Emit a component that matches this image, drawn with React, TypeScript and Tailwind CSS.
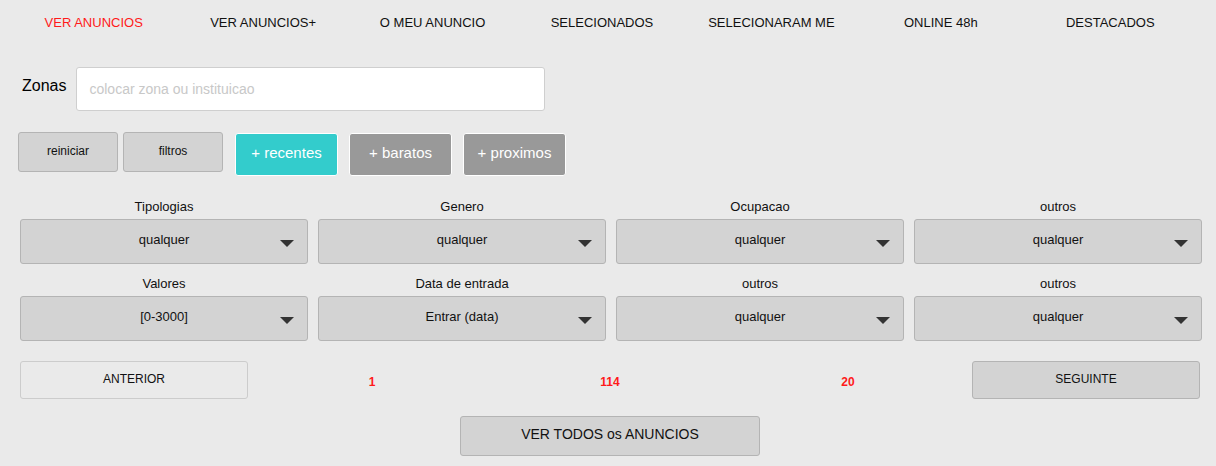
const NAV_ITEMS = [
  "VER ANUNCIOS",
  "VER ANUNCIOS+",
  "O MEU ANUNCIO",
  "SELECIONADOS",
  "SELECIONARAM ME",
  "ONLINE 48h",
  "DESTACADOS",
]

const FILTER_ROWS = [
  [
    { label: "Tipologias", value: "qualquer" },
    { label: "Genero", value: "qualquer" },
    { label: "Ocupacao", value: "qualquer" },
    { label: "outros", value: "qualquer" },
  ],
  [
    { label: "Valores", value: "[0-3000]" },
    { label: "Data de entrada", value: "Entrar (data)" },
    { label: "outros", value: "qualquer" },
    { label: "outros", value: "qualquer" },
  ],
]

function SelectBox({ value }: { value: string }) {
  return (
    <div className="relative flex h-[45px] items-center justify-center rounded-[3px] border border-[#b4b4b4] bg-[#d3d3d3] text-[13px] text-[#111]">
      <span className="-mt-[4px]">{value}</span>
      <svg
        className="absolute right-[13px] top-[20px]"
        width="14"
        height="7"
        viewBox="0 0 14 7"
      >
        <path d="M0 0 L14 0 L7 7 Z" fill="#333" />
      </svg>
    </div>
  )
}

export default function App() {
  return (
    <div
      className="min-h-[466px] w-[1216px] bg-[#eaeaea] text-black"
      style={{ fontFamily: '"Liberation Sans", Arial, sans-serif' }}
    >
      <nav className="ml-[9px] grid w-[1186px] grid-cols-7 pt-[15px]">
        {NAV_ITEMS.map((item, i) => (
          <a
            key={item}
            href="#"
            className={`text-center text-[13px] leading-[15px] ${i === 0 ? "text-[#ff1a1a]" : "text-[#111]"}`}
          >
            {item}
          </a>
        ))}
      </nav>

      <div className="mt-[37px] flex items-center pl-[22px]">
        <label className="mr-[10px] -mt-[6px] text-[16px] leading-[18px]">Zonas</label>
        <input
          type="text"
          placeholder="colocar zona ou instituicao"
          className="h-[44px] w-[469px] rounded-[3px] border border-[#cfcfcf] bg-white px-[12px] text-[14px] outline-none placeholder:text-[#c8c8c8]"
        />
      </div>

      <div className="mt-[21px] flex items-start pl-[18px]">
        <button className="h-[40px] w-[100px] rounded-[3px] border border-[#b4b4b4] bg-[#d3d3d3] pb-[3px] text-[12px] text-[#111]">
          reiniciar
        </button>
        <button className="ml-[5px] h-[40px] w-[100px] rounded-[3px] border border-[#b4b4b4] bg-[#d3d3d3] pb-[3px] text-[12px] text-[#111]">
          filtros
        </button>
        <button className="ml-[12px] mt-[1px] h-[43px] w-[103px] rounded-[3px] border border-white bg-[#33cccc] pb-[3px] text-[15px] text-white">
          + recentes
        </button>
        <button className="ml-[11px] mt-[1px] h-[43px] w-[103px] rounded-[3px] border border-white bg-[#999999] pb-[3px] text-[15px] text-white">
          + baratos
        </button>
        <button className="ml-[11px] mt-[1px] h-[43px] w-[103px] rounded-[3px] border border-white bg-[#999999] pb-[3px] text-[15px] text-white">
          + proximos
        </button>
      </div>

      <div className="mt-[23px] flex flex-col gap-[12px] pl-[20px] pr-[14px]">
        {FILTER_ROWS.map((row, r) => (
          <div key={r} className="grid grid-cols-4 gap-[10px]">
            {row.map((f, i) => (
              <div key={i} className="flex flex-col">
                <div className="h-[20px] text-center text-[13px] leading-[15px] text-[#111]">{f.label}</div>
                <SelectBox value={f.value} />
              </div>
            ))}
          </div>
        ))}
      </div>

      <div className="mt-[20px] flex items-center pl-[20px] pr-[16px]">
        <button className="h-[38px] w-[228px] rounded-[3px] border border-[#cccccc] bg-[#eaeaea] pb-[2px] text-[12px] text-[#111]">
          ANTERIOR
        </button>
        <div className="grid flex-1 grid-cols-3 px-[5px] pt-[3px] text-[12px] font-bold text-[#ff1a1a]">
          <span className="text-center">1</span>
          <span className="text-center">114</span>
          <span className="text-center">20</span>
        </div>
        <button className="h-[38px] w-[228px] rounded-[3px] border border-[#b4b4b4] bg-[#d3d3d3] pb-[2px] text-[12px] text-[#111]">
          SEGUINTE
        </button>
      </div>

      <div className="mt-[17px] flex justify-center pl-[4px]">
        <button className="h-[40px] w-[300px] rounded-[3px] border border-[#b4b4b4] bg-[#d3d3d3] pb-[3px] text-[14px] text-[#111]">
          VER TODOS os ANUNCIOS
        </button>
      </div>
    </div>
  )
}
